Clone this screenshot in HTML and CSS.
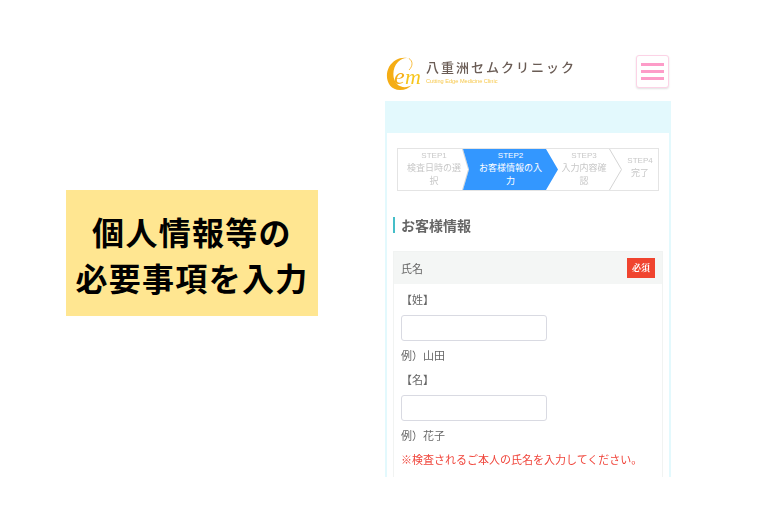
FILE: index.html
```html
<!DOCTYPE html>
<html lang="ja">
<head>
    <meta charset="utf-8">
    <title>個人情報等の必要事項を入力</title>
    <link rel="stylesheet" href="styles.css">
</head>
<body>
    <div class="page">
        <div class="banner">個人情報等の<br>必要事項を入力</div>

        <div class="phone">
            <header class="site-header">
                <div class="logo">
                    <svg class="logo-mark" width="38" height="36" viewBox="0 0 38 36">
                        <path d="M24 2C18 -1 8 1 3 10C-2 20 2 33 14 33C19 33 23 31 26 28C21 31 15 31 11 27C6 22 6 11 12 5C16 1 21 0 24 2Z" fill="#f5ad14"/>
                        <path d="M23 1.500C27 4 27 9 23 13" fill="none" stroke="#f5ad14" stroke-width="0.8"/>
                        <text x="8" y="27" class="logo-e">e</text>
                        <text x="19" y="27" class="logo-m">m</text>
                    </svg>
                    <div class="logo-text">
                        <div class="logo-name">八重洲セムクリニック</div>
                        <div class="logo-sub">Cutting Edge Medicine Clinic</div>
                    </div>
                </div>
                <button class="menu-btn" type="button" aria-label="menu">
                    <span></span><span></span><span></span>
                </button>
            </header>

            <div class="panel">
                <div class="panel-inner">
                    <ol class="steps">
                        <li class="step step-1">
                            <span class="step-no">STEP1</span>検査日時の選択
                            <svg class="chevron" width="7" height="41" viewBox="0 0 7 41"><path d="M0.500 0L6.500 20.500L0.500 41" fill="none" stroke="#d4d4d4"/></svg>
                        </li>
                        <li class="step step-2">
                            <span class="step-no">STEP2</span>お客様情報の入力
                        </li>
                        <li class="step step-3">
                            <span class="step-no">STEP3</span>入力内容確認
                            <svg class="chevron" width="13" height="41" viewBox="0 0 13 41"><path d="M0.500 0L12.500 20.500L0.500 41" fill="none" stroke="#d4d4d4"/></svg>
                        </li>
                        <li class="step step-4">
                            <span class="step-no">STEP4</span>完了
                        </li>
                    </ol>

                    <h2 class="section-title">お客様情報</h2>

                    <div class="field">
                        <div class="field-head">
                            <span>氏名</span>
                            <span class="required">必須</span>
                        </div>
                        <div class="field-body">
                            <div class="name-label">【姓】</div>
                            <input class="text-input" type="text">
                            <div class="hint">例）山田</div>
                            <div class="name-label">【名】</div>
                            <input class="text-input" type="text">
                            <div class="hint">例）花子</div>
                            <p class="note">※検査されるご本人の氏名を入力してください。</p>
                        </div>
                    </div>
                </div>
            </div>
        </div>
    </div>
</body>
</html>
```

FILE: styles.css
```css
body {
    background-color: #ffffff;
    margin: 0;
    padding: 0;
    font-family: "Noto Sans CJK JP", "Noto Sans", sans-serif;
}

.page {
    display: flex;
    align-items: flex-start;
    width: 770px;
    height: 520px;
    overflow: hidden;
}

.banner {
    width: 252px;
    height: 126px;
    margin: 190px 0 0 66px;
    background-color: #ffe691;
    color: #000000;
    font-size: 32px;
    font-weight: 700;
    line-height: 46px;
    letter-spacing: 1.300px;
    text-align: center;
    padding-top: 18px;
    box-sizing: border-box;
}

.phone {
    width: 286px;
    height: 427px;
    margin: 50px 0 0 67px;
    overflow: hidden;
    filter: blur(0.45px);
}

.site-header {
    display: flex;
    justify-content: space-between;
    height: 51px;
    padding: 4px 2px 0 1px;
    box-sizing: border-box;
}

.logo {
    display: flex;
    align-items: flex-start;
    padding-top: 1px;
}

.logo-mark {
    flex: none;
    margin-top: 2px;
}

.logo-e {
    font-family: "Liberation Serif", serif;
    font-style: italic;
    font-size: 24px;
    fill: #f5ad14;
}

.logo-m {
    font-family: "Liberation Serif", serif;
    font-style: italic;
    font-size: 22px;
    fill: #f7c61d;
}

.logo-text {
    margin-left: 2px;
}

.logo-name {
    color: #6a5c55;
    font-size: 13px;
    font-weight: 500;
    line-height: 18px;
    letter-spacing: 2px;
    margin-top: 3px;
    white-space: nowrap;
}

.logo-sub {
    color: #f7c84a;
    font-family: "Liberation Sans", sans-serif;
    font-size: 5.600px;
    line-height: 8px;
    margin-top: 1px;
    white-space: nowrap;
}

.menu-btn {
    display: flex;
    flex-direction: column;
    justify-content: center;
    gap: 4px;
    width: 33px;
    height: 33px;
    margin-top: 1px;
    padding: 0 4px;
    background-color: #ffffff;
    border: 1px solid #fcd3e6;
    border-radius: 3px;
    box-shadow: 0 1px 2px rgba(0, 0, 0, 0.12);
}

.menu-btn span {
    display: block;
    height: 3px;
    background-color: #fd9cc8;
}

.panel {
    background-color: #e3f9fd;
    padding: 32px 2px 0;
    height: 376px;
    box-sizing: border-box;
}

.panel-inner {
    background-color: #ffffff;
    height: 100%;
    padding: 15px 7px 0 6px;
    box-sizing: border-box;
}

.steps {
    display: flex;
    list-style: none;
    width: 262px;
    height: 43px;
    margin: 0 0 0 4px;
    padding: 0;
    border: 1px solid #e4e4e4;
    box-sizing: border-box;
}

.step {
    position: relative;
    flex: none;
    box-sizing: border-box;
    color: #c8c8c8;
    font-size: 9px;
    line-height: 13px;
    text-align: center;
}

.step-no {
    display: block;
    font-family: "Liberation Sans", sans-serif;
    font-size: 8px;
    line-height: 10px;
    padding-top: 2px;
}

.chevron {
    position: absolute;
    top: 0;
    right: 0;
}

.step-1 {
    width: 71px;
    margin-right: -6px;
    padding: 0 7px 0 8px;
}

.step-2 {
    width: 95px;
    height: 41px;
    margin-right: -12px;
    padding: 0 14px;
    background-color: #3397ff;
    color: #ffffff;
    clip-path: polygon(0 0, 83px 0, 100% 50%, 83px 100%, 0 100%, 6px 50%);
    z-index: 1;
}

.step-3 {
    width: 76px;
    padding: 0 13px;
    margin-right: 0;
}

.step-4 {
    flex: 1;
    padding-top: 5px;
}

.section-title {
    margin: 26px 0 18px;
    padding-left: 6px;
    color: #666666;
    font-size: 14px;
    font-weight: 700;
    line-height: 16px;
    border-left: 2px solid #45bec8;
    height: 16px;
    box-sizing: border-box;
    display: flex;
    align-items: center;
}

.field {
    border: 1px solid #f1f3f2;
    border-bottom: none;
    width: 270px;
    box-sizing: border-box;
}

.field-head {
    display: flex;
    justify-content: space-between;
    align-items: center;
    height: 32px;
    padding: 0 7px 0 7px;
    background-color: #f4f6f5;
    color: #666666;
    font-size: 11px;
}

.required {
    width: 28px;
    height: 20px;
    background-color: #f0442f;
    color: #ffffff;
    font-family: "Noto Serif CJK JP", "Noto Sans CJK JP", serif;
    font-size: 9px;
    font-weight: 700;
    line-height: 20px;
    text-align: center;
}

.field-body {
    padding: 7px 7px 0;
    color: #666666;
    font-size: 11px;
    height: 200px;
}

.name-label {
    line-height: 16px;
    margin-bottom: 8px;
}

.text-input {
    display: block;
    width: 146px;
    height: 26px;
    padding: 0;
    background-color: #ffffff;
    border: 1px solid #d9dae2;
    border-radius: 3px;
    box-sizing: border-box;
}

.hint {
    line-height: 16px;
    margin: 6px 0 8px;
}

.note {
    margin: 0;
    color: #f0443a;
    font-size: 11px;
    line-height: 16px;
    white-space: nowrap;
}
```
